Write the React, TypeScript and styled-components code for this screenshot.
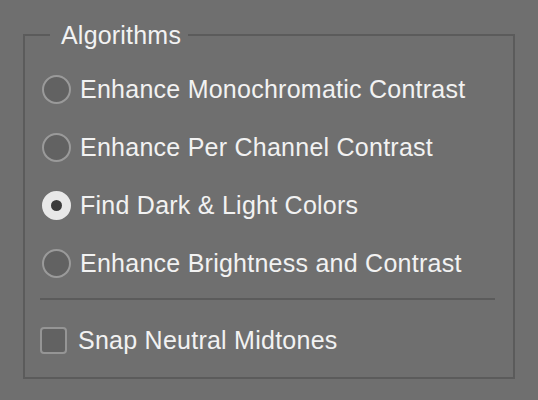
import React from "react";
import styled, { createGlobalStyle } from "styled-components";

const GlobalStyle = createGlobalStyle`
  html, body {
    margin: 0;
    padding: 0;
    background: #6f6f6f;
  }
  body {
    font-family: "Liberation Sans", Arial, sans-serif;
  }
`;

const Page = styled.div`
  width: 538px;
  height: 400px;
  box-sizing: border-box;
  padding: 22px 23px 0 23px;
`;

const Group = styled.fieldset`
  margin: 0;
  width: 492px;
  box-sizing: border-box;
  border: 2px solid #5b5b5b;
  padding: 12px 18px 8px 15px;
  display: flex;
  flex-direction: column;
`;

const Legend = styled.legend`
  margin-left: 10px;
  padding: 0 7px 0 11px;
  font-size: 25px;
  letter-spacing: 0.2px;
  line-height: 26px;
  color: #f2f2f2;
`;

const Row = styled.label`
  height: 58px;
  display: flex;
  align-items: center;
  gap: 9px;
  padding-left: 2px;
  font-size: 25px;
  letter-spacing: 0.25px;
  color: #f2f2f2;
`;

const Radio = styled.span<{ $checked?: boolean }>`
  width: 29px;
  height: 29px;
  box-sizing: border-box;
  border-radius: 50%;
  flex: none;
  display: flex;
  align-items: center;
  justify-content: center;
  background: ${(p) => (p.$checked ? "#e8e8e8" : "#626262")};
  border: 2px solid ${(p) => (p.$checked ? "#e8e8e8" : "#9a9a9a")};

  &::after {
    content: "";
    display: ${(p) => (p.$checked ? "block" : "none")};
    width: 11px;
    height: 11px;
    border-radius: 50%;
    background: #3b3b3b;
  }
`;

const Divider = styled.div`
  height: 2px;
  background: #5b5b5b;
  margin-top: 6px;
`;

const CheckRow = styled(Row)`
  padding-left: 0;
  margin-top: 11px;
  gap: 11px;
`;

const Checkbox = styled.span`
  width: 27px;
  height: 27px;
  box-sizing: border-box;
  flex: none;
  border-radius: 4px;
  background: #626262;
  border: 2px solid #959595;
`;

const algorithms = [
  "Enhance Monochromatic Contrast",
  "Enhance Per Channel Contrast",
  "Find Dark & Light Colors",
  "Enhance Brightness and Contrast",
];

export default function App() {
  const selected = 2;
  return (
    <Page>
      <GlobalStyle />
      <Group>
        <Legend>Algorithms</Legend>
        {algorithms.map((name, i) => (
          <Row key={name}>
            <Radio $checked={i === selected} />
            {name}
          </Row>
        ))}
        <Divider />
        <CheckRow>
          <Checkbox />
          Snap Neutral Midtones
        </CheckRow>
      </Group>
    </Page>
  );
}
